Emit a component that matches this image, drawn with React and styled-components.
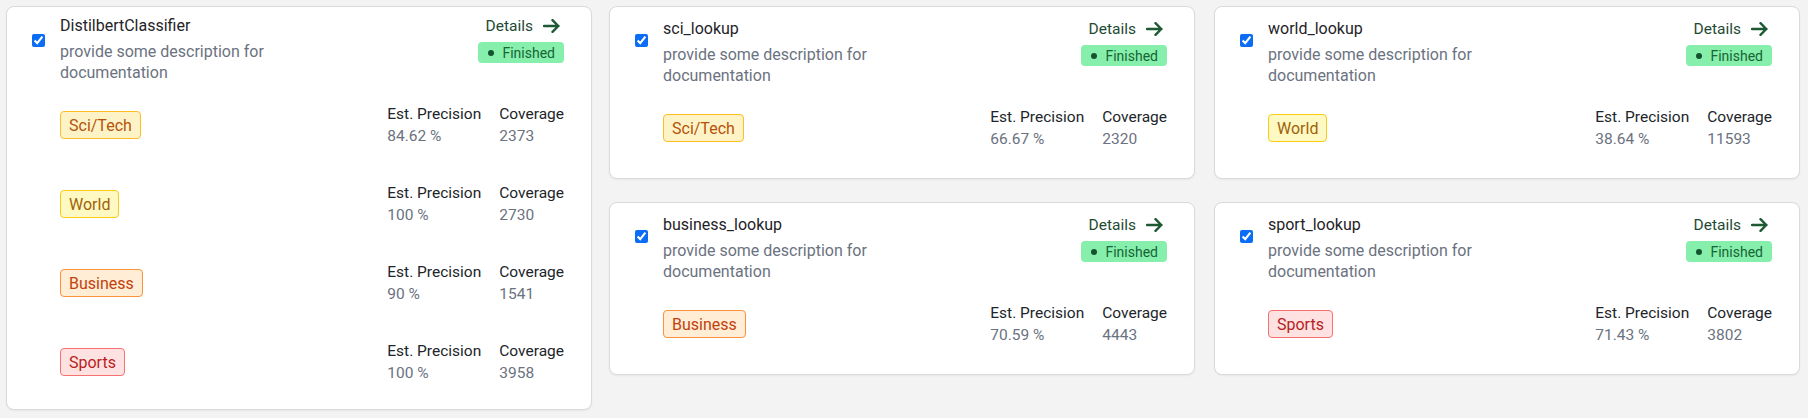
import styled, { createGlobalStyle } from 'styled-components'

const GlobalStyle = createGlobalStyle`
  body {
    margin: 0;
    background: #f3f3f3;
    font-family: Roboto, 'Liberation Sans', sans-serif;
  }
`

const tagColors = {
  'Sci/Tech': { bg: '#fef3c7', border: '#fbbf24', color: '#b45309' },
  World: { bg: '#fef9c3', border: '#facc15', color: '#a16207' },
  Business: { bg: '#ffedd5', border: '#fb923c', color: '#c2410c' },
  Sports: { bg: '#fee2e2', border: '#f87171', color: '#b91c1c' },
}

const description = 'provide some description for documentation'

const mainCard = {
  name: 'DistilbertClassifier',
  rows: [
    { label: 'Sci/Tech', precision: '84.62 %', coverage: '2373' },
    { label: 'World', precision: '100 %', coverage: '2730' },
    { label: 'Business', precision: '90 %', coverage: '1541' },
    { label: 'Sports', precision: '100 %', coverage: '3958' },
  ],
}

const lookups = [
  { name: 'sci_lookup', rows: [{ label: 'Sci/Tech', precision: '66.67 %', coverage: '2320' }] },
  { name: 'world_lookup', rows: [{ label: 'World', precision: '38.64 %', coverage: '11593' }] },
  { name: 'business_lookup', rows: [{ label: 'Business', precision: '70.59 %', coverage: '4443' }] },
  { name: 'sport_lookup', rows: [{ label: 'Sports', precision: '71.43 %', coverage: '3802' }] },
]

const ArrowIcon = () => (
  <svg width='17' height='14' viewBox='0 0 17 14' fill='none'>
    <path
      d='M1 7h14.5M9.5 1.2 15.3 7l-5.8 5.8'
      stroke='#1d5a34'
      strokeWidth='2.4'
      strokeLinecap='round'
      strokeLinejoin='round'
    />
  </svg>
)

const LabelCard = ({ name, rows, $main }) => (
  <Card $main={$main}>
    <Header>
      <HeaderLeft>
        <Check type='checkbox' defaultChecked $main={$main} />
        <TextBlock>
          <Title>{name}</Title>
          <Description>{description}</Description>
        </TextBlock>
      </HeaderLeft>
      <HeaderRight>
        <DetailsLink href='#'>
          Details
          <ArrowIcon />
        </DetailsLink>
        <StatusBadge>
          <Dot />
          Finished
        </StatusBadge>
      </HeaderRight>
    </Header>
    <Rows>
      {rows.map((row) => (
        <Row key={row.label}>
          <Tag $kind={row.label}>{row.label}</Tag>
          <Metrics>
            <Metric>
              <MetricLabel>Est. Precision</MetricLabel>
              <MetricValue>{row.precision}</MetricValue>
            </Metric>
            <Metric>
              <MetricLabel>Coverage</MetricLabel>
              <MetricValue>{row.coverage}</MetricValue>
            </Metric>
          </Metrics>
        </Row>
      ))}
    </Rows>
  </Card>
)

const App = () => {
  return (
    <>
      <GlobalStyle />
      <Page>
        <MainColumn>
          <LabelCard name={mainCard.name} rows={mainCard.rows} $main />
        </MainColumn>
        <Grid>
          {lookups.map((item) => (
            <LabelCard key={item.name} name={item.name} rows={item.rows} />
          ))}
        </Grid>
      </Page>
    </>
  )
}

const Page = styled.div`
  display: flex;
  align-items: flex-start;
  gap: 17px;
  padding: 6px 8px 8px 6px;
`

const MainColumn = styled.div`
  flex: 0 0 586px;
`

const Grid = styled.div`
  flex: 1;
  display: grid;
  grid-template-columns: 1fr 1fr;
  column-gap: 19px;
  row-gap: 23px;
`

const Card = styled.div`
  background: #fff;
  border: 1px solid #dadada;
  border-radius: 8px;
  box-shadow: 0 1px 2px rgba(0, 0, 0, 0.05);
  padding: ${(p) => (p.$main ? '9px 27px 25px 25px' : '12px 27px 28px 25px')};
`

const Header = styled.div`
  display: flex;
  justify-content: space-between;
  align-items: flex-start;
`

const HeaderLeft = styled.div`
  display: flex;
  align-items: flex-start;
  gap: 15px;
`

const Check = styled.input`
  width: 13px;
  height: 13px;
  margin: ${(p) => (p.$main ? '18px' : '15px')} 0 0 0;
  accent-color: #0b6cf5;
`

const TextBlock = styled.div`
  display: flex;
  flex-direction: column;
`

const Title = styled.div`
  font-size: 16px;
  line-height: 20px;
  color: #1f2328;
`

const Description = styled.div`
  margin-top: 5px;
  max-width: 240px;
  font-size: 16px;
  line-height: 21px;
  color: #6b7280;
`

const HeaderRight = styled.div`
  display: flex;
  flex-direction: column;
  align-items: flex-end;
  gap: 6px;
`

const DetailsLink = styled.a`
  display: flex;
  align-items: center;
  gap: 10px;
  margin-right: 4px;
  font-size: 15.5px;
  line-height: 20px;
  color: #1e4a33;
  text-decoration: none;
`

const StatusBadge = styled.span`
  display: flex;
  align-items: center;
  gap: 8px;
  height: 21px;
  padding: 0 9px 0 10px;
  border-radius: 4px;
  background: #86efac;
  color: #166534;
  font-size: 14px;
`

const Dot = styled.span`
  width: 6px;
  height: 6px;
  border-radius: 50%;
  background: #14532d;
`

const Rows = styled.div`
  display: flex;
  flex-direction: column;
  gap: 35px;
  margin: 20px 0 0 28px;
`

const Row = styled.div`
  display: flex;
  justify-content: space-between;
  align-items: center;
`

const Tag = styled.span`
  display: inline-flex;
  align-items: center;
  height: 28px;
  box-sizing: border-box;
  padding: 0 8px;
  border-radius: 4px;
  font-size: 16px;
  background: ${(p) => tagColors[p.$kind].bg};
  border: 1px solid ${(p) => tagColors[p.$kind].border};
  color: ${(p) => tagColors[p.$kind].color};
`

const Metrics = styled.div`
  display: flex;
  gap: 18px;
`

const Metric = styled.div`
  display: flex;
  flex-direction: column;
  font-size: 15.5px;
  line-height: 22px;
`

const MetricLabel = styled.span`
  color: #212529;
`

const MetricValue = styled.span`
  color: #6b7280;
`

export default App
